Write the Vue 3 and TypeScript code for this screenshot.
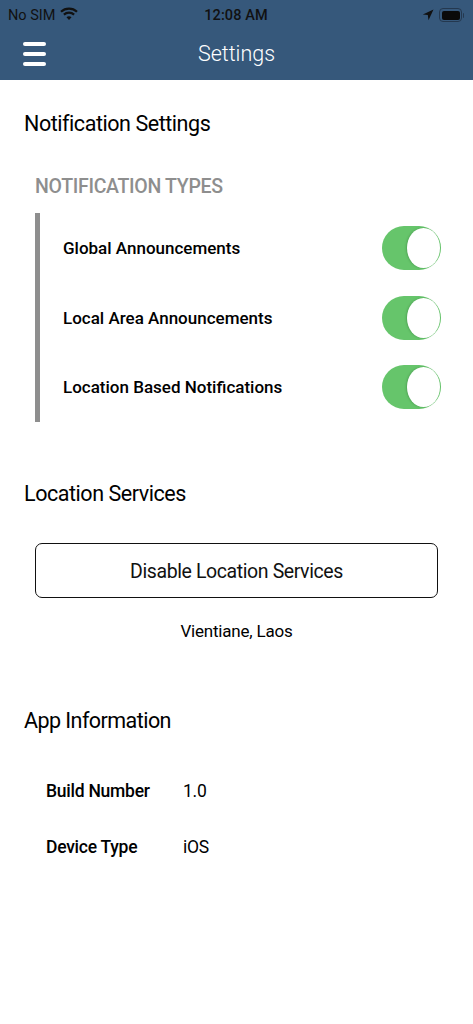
<script setup lang="ts">
const toggles: string[] = ['Global Announcements', 'Local Area Announcements', 'Location Based Notifications']
const info: { label: string; value: string }[] = [
  { label: 'Build Number', value: '1.0' },
  { label: 'Device Type', value: 'iOS' },
]
</script>

<template>
  <div class="page">
    <header class="top">
      <div class="status">
        <div class="st-left">
          <span>No SIM</span>
          <svg class="wifi" width="18" height="14" viewBox="0 0 18 14">
            <path d="M1 4.8C5.5 .6 12.5 .6 17 4.8" fill="none" stroke="#111" stroke-width="2.2" />
            <path d="M3.9 7.6C6.8 5 11.2 5 14.1 7.6" fill="none" stroke="#111" stroke-width="2.2" />
            <path d="M6.5 10.2 9 13l2.5-2.8C10 8.9 8 8.9 6.5 10.2Z" fill="#111" />
          </svg>
        </div>
        <span class="st-time">12:08 AM</span>
        <div class="st-right">
          <svg width="12" height="12" viewBox="0 0 12 12"><path d="M11.5.5 .8 5.4l5 .7.7 5.2Z" fill="#111" /></svg>
          <div class="battery"><div class="level"></div></div>
        </div>
      </div>
      <div class="nav">
        <div class="burger"><i></i><i></i><i></i></div>
        <span class="nav-title">Settings</span>
      </div>
    </header>

    <main class="content">
      <h2 class="h-notif">Notification Settings</h2>
      <h3 class="sub">NOTIFICATION TYPES</h3>
      <div class="types">
        <div v-for="t in toggles" :key="t" class="row">
          <span class="label">{{ t }}</span>
          <div class="switch"><div class="knob"></div></div>
        </div>
      </div>

      <h2 class="h-loc">Location Services</h2>
      <button class="btn">Disable Location Services</button>
      <p class="place">Vientiane, Laos</p>

      <h2 class="h-app">App Information</h2>
      <div class="info">
        <div v-for="r in info" :key="r.label" class="info-row">
          <span class="info-label">{{ r.label }}</span>
          <span class="info-value">{{ r.value }}</span>
        </div>
      </div>
    </main>
  </div>
</template>

<style>
html, body { margin: 0; background: #fff; }
</style>

<style scoped>
.page {
  width: 473px;
  height: 1024px;
  overflow: hidden;
  background: #fff;
  color: #000;
  font-family: Roboto, "Liberation Sans", sans-serif;
}
.top { height: 80px; background: #36587b; }
.status {
  height: 30px;
  display: grid;
  grid-template-columns: 1fr auto 1fr;
  align-items: center;
  padding: 0 9px 0 8px;
  font-size: 14.5px;
  color: #111;
}
.st-left { display: flex; align-items: center; gap: 5px; }
.wifi { margin-top: -3px; }
.st-time { font-weight: 500; letter-spacing: .1px; }
.st-right { display: flex; justify-content: flex-end; align-items: center; gap: 5px; padding-right: 2px; }
.battery {
  position: relative;
  width: 23px;
  height: 14px;
  box-sizing: border-box;
  border: 1px solid #24384f;
  border-radius: 4px;
  padding: 1.5px;
}
.battery::after {
  content: "";
  position: absolute;
  right: -3px;
  top: 3.5px;
  width: 1.5px;
  height: 5px;
  background: #24384f;
  border-radius: 0 1px 1px 0;
}
.level { height: 100%; background: #0a0a0a; border-radius: 2px; }
.nav { position: relative; height: 50px; display: flex; align-items: center; justify-content: center; margin-top: -2px; }
.burger {
  position: absolute;
  left: 23px;
  top: 14px;
  width: 23px;
  display: flex;
  flex-direction: column;
  gap: 6px;
}
.burger i { display: block; height: 4px; border-radius: 2px; background: #fff; }
.nav-title { color: #fff; font-size: 21.5px; font-weight: 300; }
.content { padding: 0 24px; }
h2 { margin: 0; font-size: 21.5px; letter-spacing: -.45px; font-weight: 400; line-height: 28px; }
.h-notif { padding-top: 30px; }
.sub {
  margin: 37px 0 0 11px;
  font-size: 19.5px;
  letter-spacing: -.3px;
  line-height: 24px;
  font-weight: 500;
  color: #8e8e8e;
}
.types {
  margin: 14px 0 0 11px;
  border-left: 5px solid #8e8e8e;
  height: 209px;
  padding: 13px 0 0 23px;
  width: 406px;
  box-sizing: border-box;
  display: flex;
  flex-direction: column;
  gap: 25.5px;
}
.row { display: flex; justify-content: space-between; align-items: center; height: 44px; }
.label { font-size: 17px; font-weight: 500; }
.switch {
  width: 59px;
  height: 44px;
  box-sizing: border-box;
  border-radius: 22px;
  background: #66c56b;
  display: flex;
  justify-content: flex-end;
  padding: 2px 1.5px;
}
.knob { width: 33px; height: 40px; border-radius: 50%; background: #fff; box-shadow: -1px 0 2px rgba(40, 110, 50, .35); }
.h-loc { margin-top: 58px; }
.btn {
  display: block;
  margin: 35px 0 0 11px;
  width: 403px;
  height: 55px;
  padding: 2px 0 0;
  background: #fff;
  border: 1.5px solid #111;
  border-radius: 7px;
  font: 400 19.5px Roboto, "Liberation Sans", sans-serif;
  letter-spacing: -.4px;
  color: #111;
}
.place { margin: 22px 0 0 11px; width: 403px; text-align: center; font-size: 17px; letter-spacing: -.2px; line-height: 22px; }
.h-app { margin-top: 65px; letter-spacing: -.55px; }
.info { margin: 44px 0 0 22px; display: flex; flex-direction: column; gap: 32px; }
.info-row { display: flex; height: 24px; align-items: center; font-size: 17.5px; letter-spacing: -.25px; }
.info-label { width: 137px; font-weight: 500; }
</style>
